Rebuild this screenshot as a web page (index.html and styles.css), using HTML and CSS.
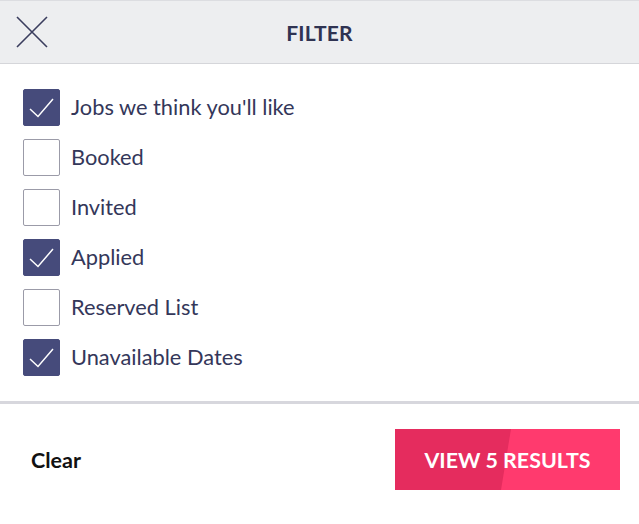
FILE: index.html
```html
<!DOCTYPE html>
<html lang="en">
<head>
<meta charset="utf-8">
<title>Filter</title>
<link rel="stylesheet" href="styles.css">
</head>
<body>
<div class="panel">
  <header class="header">
    <button class="close" aria-label="Close">
      <svg width="32" height="32" viewBox="0 0 32 32"><path d="M1 1 L31 31 M31 1 L1 31" stroke="#3a3d5e" stroke-width="1.6" fill="none"/></svg>
    </button>
    <h1 class="title">FILTER</h1>
  </header>
  <ul class="options">
    <li class="option"><span class="box checked"><svg viewBox="0 0 37 37"><polyline points="7,20 15,27.5 30,10" /></svg></span><span class="label">Jobs we think you'll like</span></li>
    <li class="option"><span class="box"></span><span class="label">Booked</span></li>
    <li class="option"><span class="box"></span><span class="label">Invited</span></li>
    <li class="option"><span class="box checked"><svg viewBox="0 0 37 37"><polyline points="7,20 15,27.5 30,10" /></svg></span><span class="label">Applied</span></li>
    <li class="option"><span class="box"></span><span class="label">Reserved List</span></li>
    <li class="option"><span class="box checked"><svg viewBox="0 0 37 37"><polyline points="7,20 15,27.5 30,10" /></svg></span><span class="label">Unavailable Dates</span></li>
  </ul>
  <footer class="footer">
    <button class="clear">Clear</button>
    <button class="results"><span class="results-text">VIEW 5 RESULTS</span></button>
  </footer>
</div>
</body>
</html>
```
FILE: styles.css
```css
* { box-sizing: border-box; }
html, body { margin: 0; padding: 0; background: #fff; }
body { font-family: Lato, "Open Sans", "Liberation Sans", sans-serif; width: 639px; height: 524px; overflow: hidden; }

.header {
  position: relative;
  height: 64px;
  background: #edeef0;
  border-top: 1px solid #dcdde1;
  border-bottom: 1px solid #d5d6da;
  display: flex;
  align-items: center;
  justify-content: center;
}
.close {
  position: absolute;
  left: 16px;
  top: 15px;
  width: 32px;
  height: 32px;
  padding: 0;
  border: 0;
  background: transparent;
}
.close svg { display: block; }
.title {
  margin: 0;
  font-size: 21px;
  font-weight: 700;
  color: #2f3352;
  letter-spacing: 0.2px;
}

.options {
  list-style: none;
  margin: 0;
  padding: 25px 0 25px 23px;
  display: flex;
  flex-direction: column;
  gap: 13px;
}
.option {
  display: flex;
  align-items: center;
  height: 37px;
}
.box {
  width: 37px;
  height: 37px;
  border: 1px solid #9b9ba8;
  border-radius: 2px;
  background: #fff;
  flex: none;
}
.box.checked { background: #464b7b; border-color: #464b7b; }
.box svg { display: block; width: 37px; height: 37px; margin: -1px; }
.box polyline { fill: none; stroke: #fff; stroke-width: 1.5; }
.label {
  margin-left: 11px;
  padding-bottom: 2px;
  font-size: 21.8px;
  color: #34375a;
}

.footer {
  border-top: 3px solid #d7d7dd;
  display: flex;
  align-items: center;
  justify-content: space-between;
  padding: 25px 19px 0 31px;
}
.clear {
  border: 0;
  background: transparent;
  padding: 0;
  font-family: inherit;
  font-size: 21.5px;
  font-weight: 700;
  color: #111;
}
.results {
  width: 225px;
  height: 61px;
  border: 0;
  padding: 0;
  font-family: inherit;
  font-size: 21.4px;
  font-weight: 700;
  color: #fff;
  background: #ff3a6e;
  position: relative;
  overflow: hidden;
}
.results::before {
  content: "";
  position: absolute;
  inset: 0;
  background: #e52c5e;
  clip-path: polygon(0 0, 116px 0, 106px 100%, 0 100%);
}
.results-text { position: relative; }
```
